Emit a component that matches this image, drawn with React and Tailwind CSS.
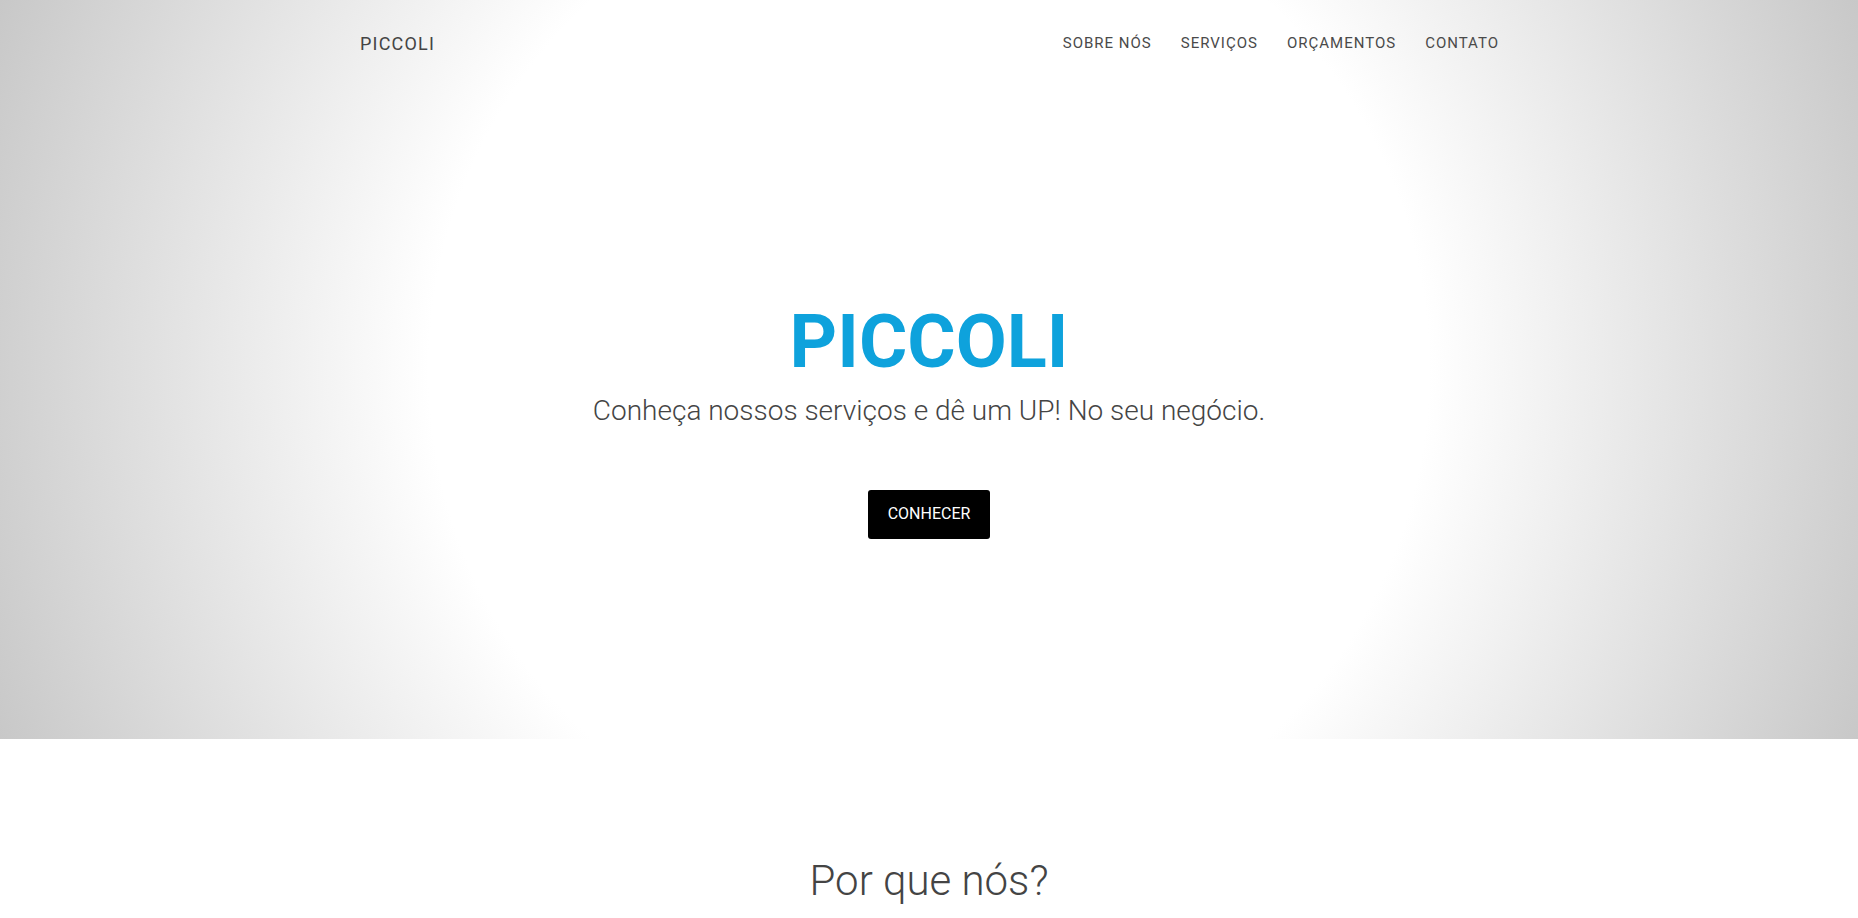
import React from 'react'

const links = ['SOBRE NÓS', 'SERVIÇOS', 'ORÇAMENTOS', 'CONTATO']

function Navbar() {
  return (
    <nav className="w-[1140px] mx-auto h-[86px] flex items-center justify-between">
      <a href="#" className="pl-[1px] text-[18px] font-normal tracking-[1.2px] text-[#444]">
        PICCOLI
      </a>
      <ul className="flex items-center gap-[29px]">
        {links.map((l) => (
          <li key={l}>
            <a href="#" className="text-[15px] tracking-[1px] text-[#4a4a4a]">
              {l}
            </a>
          </li>
        ))}
      </ul>
    </nav>
  )
}

export default function App() {
  return (
    <div className="font-['Roboto',sans-serif] bg-white min-h-[918px]">
      {/* Hero */}
      <header className="h-[739px] bg-[radial-gradient(circle,#ffffff_50%,#c8c8c8_100%)]">
        <Navbar />
        <div className="flex flex-col items-center pt-[219px]">
          <h1 className="text-[74px] leading-none font-bold text-[#0ea2dc]">PICCOLI</h1>
          <p className="mt-[15px] text-[28px] leading-[1.2] font-light text-[#444]">
            Conheça nossos serviços e dê um UP! No seu negócio.
          </p>
          <a
            href="#"
            className="mt-[62px] h-[49px] px-5 flex items-center bg-black text-white text-[16px] rounded-[3px]"
          >
            CONHECER
          </a>
        </div>
      </header>

      {/* Por que nós */}
      <section className="pt-[117px] text-center">
        <h2 className="text-[42px] leading-[1.2] font-light text-[#444]">Por que nós?</h2>
      </section>
    </div>
  )
}
